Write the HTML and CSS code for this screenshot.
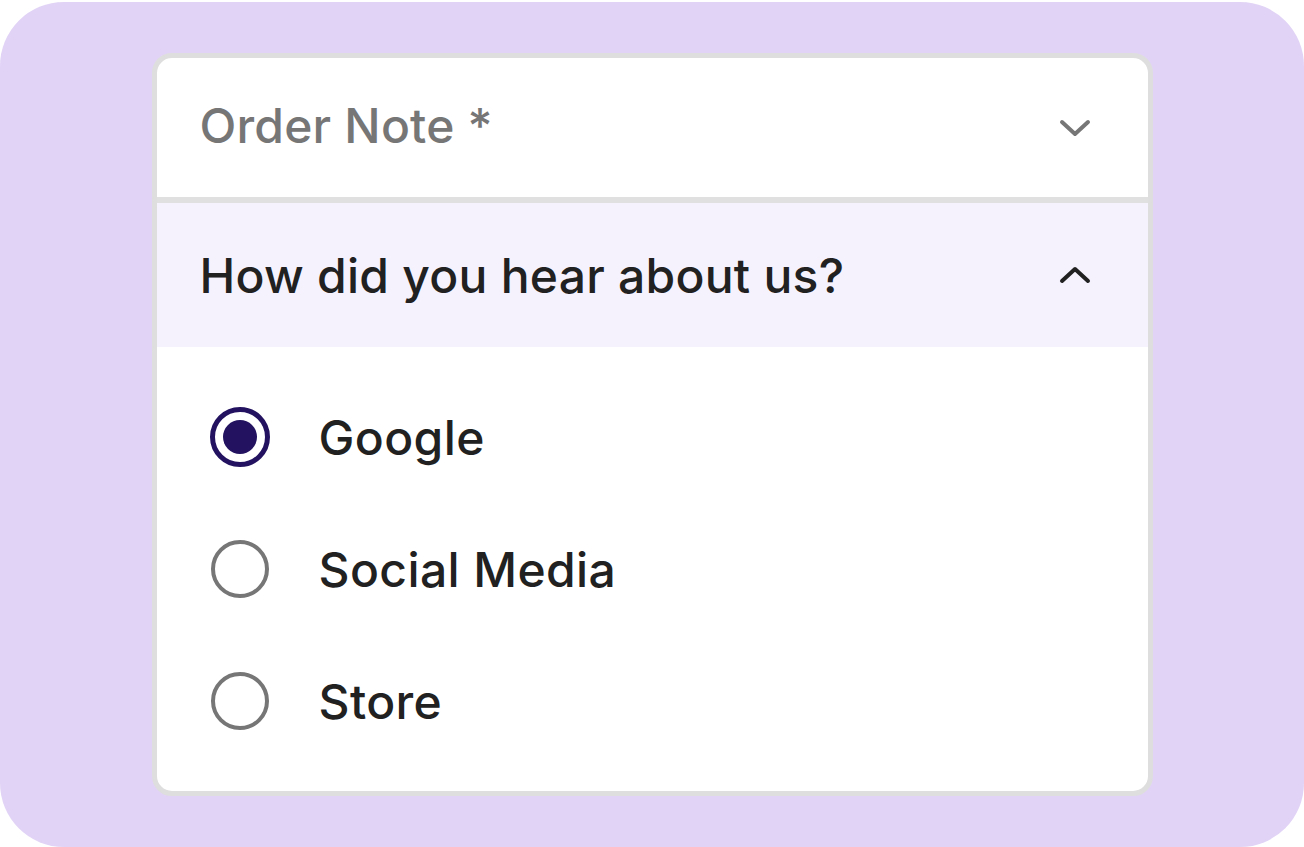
FILE: index.html
```html
<!DOCTYPE html>
<html>
<head>
<meta charset="utf-8">
<link rel="stylesheet" href="styles.css">
</head>
<body>
<div class="frame">
  <div class="card">
    <div class="acc-head closed">
      <span class="title-muted">Order Note *</span>
      <svg class="chev" width="32" height="20" viewBox="0 0 32 20"><path d="M3 4 L16 16 L29 4" fill="none" stroke="#767676" stroke-width="4" stroke-linecap="round" stroke-linejoin="round"/></svg>
    </div>
    <div class="acc-head open">
      <span class="title">How did you hear about us?</span>
      <svg class="chev" width="32" height="20" viewBox="0 0 32 20"><path d="M3 16 L16 4 L29 16" fill="none" stroke="#212121" stroke-width="4" stroke-linecap="round" stroke-linejoin="round"/></svg>
    </div>
    <div class="acc-body">
      <div class="option">
        <span class="radio checked"><span class="dot"></span></span>
        <span class="label">Google</span>
      </div>
      <div class="option">
        <span class="radio"></span>
        <span class="label">Social Media</span>
      </div>
      <div class="option">
        <span class="radio"></span>
        <span class="label">Store</span>
      </div>
    </div>
  </div>
</div>
</body>
</html>
```
FILE: styles.css
```css
html, body {
  margin: 0;
  padding: 0;
  background: #ffffff;
}
.frame {
  margin-top: 2px;
  height: 845px;
  background: #e1d3f6;
  border-radius: 64px;
  padding-top: 51px;
  box-sizing: border-box;
}
.card {
  width: 1001px;
  margin: 0 auto;
  box-sizing: border-box;
  border: 5px solid #dedede;
  border-radius: 20px;
  background: #ffffff;
  overflow: hidden;
}
.acc-head {
  display: flex;
  align-items: center;
  justify-content: space-between;
  padding: 0 57px 0 43px;
  box-sizing: border-box;
}
.acc-head.closed {
  height: 145px;
  border-bottom: 6px solid #e0e0e0;
}
.acc-head.open {
  height: 144px;
  background: #f5f2fe;
}
.title-muted {
  font-family: Inter, "Noto Sans", sans-serif;
  font-size: 48px;
  font-weight: 500;
  letter-spacing: 0.2px;
  color: #767676;
  margin-top: -4px;
}
.title {
  font-family: Inter, "Noto Sans", sans-serif;
  font-size: 48px;
  font-weight: 500;
  letter-spacing: 0.25px;
  color: #212121;
}
.chev {
  display: block;
}
.acc-body {
  padding: 24px 0 24px 54px;
}
.option {
  height: 132px;
  display: flex;
  align-items: center;
}
.radio {
  width: 58px;
  height: 58px;
  box-sizing: border-box;
  border: 4px solid #767676;
  border-radius: 50%;
  display: flex;
  align-items: center;
  justify-content: center;
  margin-right: 50px;
}
.radio.checked {
  width: 60px;
  height: 60px;
  border: 5px solid #22125f;
  margin-left: -1px;
  margin-right: 49px;
}
.dot {
  width: 34px;
  height: 34px;
  border-radius: 50%;
  background: #22125f;
}
.label {
  font-family: Inter, "Noto Sans", sans-serif;
  font-size: 48px;
  font-weight: 500;
  letter-spacing: 0.4px;
  color: #212121;
}
```
